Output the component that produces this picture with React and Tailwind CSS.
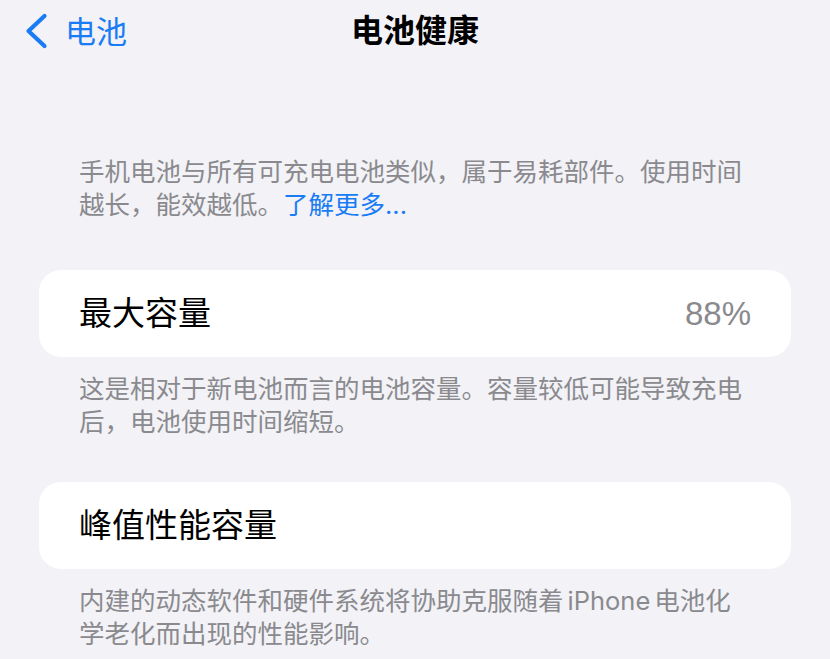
import React from 'react'

const font = { fontFamily: '"Inter", "Noto Sans CJK SC", sans-serif' }

const Note = ({ children, className = '' }) => (
    <p className={`px-[79px] text-[25.5px] leading-[33px] text-[#8a8a8e] whitespace-nowrap ${className}`}>
        {children}
    </p>
)

const Card = ({ label, value, className = '' }) => (
    <div className={`mx-[39px] h-[87px] bg-white rounded-[22px] px-10 flex items-center justify-between ${className}`}>
        <span className='text-[33px] text-black'>{label}</span>
        {value && <span className='text-[33px] text-[#8a8a8e] font-["Liberation_Sans"]'>{value}</span>}
    </div>
)

export default function App() {
    return (
        <div className='min-h-screen w-[830px] h-[659px] overflow-hidden bg-[#f2f2f7]' style={font}>
            {/* Nav bar */}
            <div className='grid grid-cols-[1fr_auto_1fr] items-center h-[62px]'>
                <div className='flex items-center pl-[24px] gap-[17px] text-[#1a7cf5]'>
                    <svg width='24' height='36' viewBox='0 0 24 36' fill='none'>
                        <path d='M20.5 3 L4.5 18 L20.5 33' stroke='currentColor' strokeWidth='4.2' strokeLinecap='round' strokeLinejoin='round' />
                    </svg>
                    <span className='text-[31px] leading-none'>电池</span>
                </div>
                <div className='text-[32px] font-bold text-black leading-none'>电池健康</div>
                <div />
            </div>

            <Note className='mt-[93px]'>
                手机电池与所有可充电电池类似，属于易耗部件。使用时间<br />
                越长，能效越低。<span className='text-[#1a7cf5]'>了解更多...</span>
            </Note>

            <Card label='最大容量' value='88%' className='mt-[49px]' />

            <Note className='mt-[15px]'>
                这是相对于新电池而言的电池容量。容量较低可能导致充电<br />
                后，电池使用时间缩短。
            </Note>

            <Card label='峰值性能容量' className='mt-[44px] h-[86px]' />

            <Note className='mt-[15px]'>
                内建的动态软件和硬件系统将协助克服随着<span className='ml-[4px] mr-[4px]'>iPhone</span>电池化<br />
                学老化而出现的性能影响。
            </Note>
        </div>
    )
}
